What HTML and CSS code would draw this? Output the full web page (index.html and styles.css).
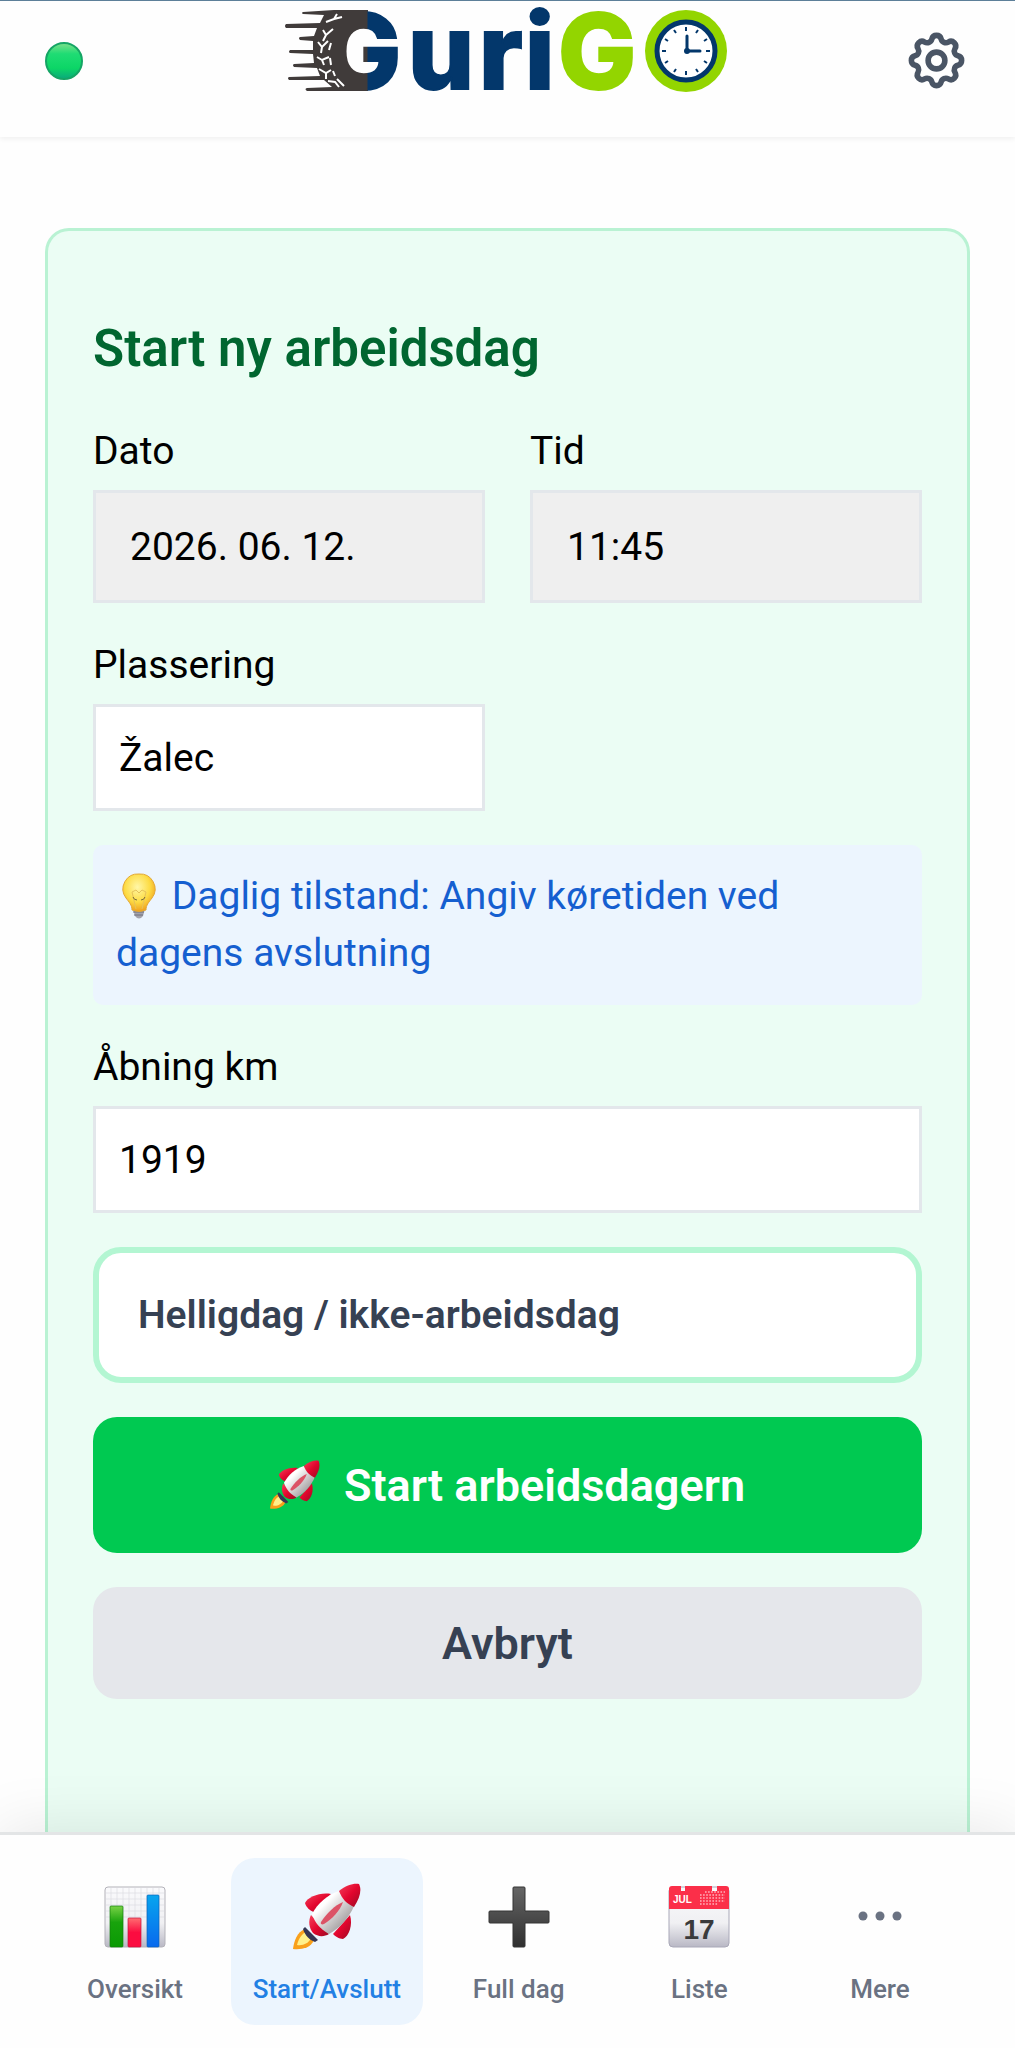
FILE: index.html
```html
<!DOCTYPE html>
<html lang="no">
<head>
  <meta charset="UTF-8" />
  <meta name="viewport" content="width=device-width, initial-scale=1.0" />
  <title>GuriGO</title>
  <link rel="stylesheet" href="styles.css">
</head>
<body>

  <!-- shared icons -->
  <svg class="sprite" aria-hidden="true">
    <defs>
      <linearGradient id="body-white" x1="0" y1="0" x2="1" y2="1">
        <stop offset="0.3" stop-color="#ffffff" />
        <stop offset="0.75" stop-color="#a9a5a6" />
      </linearGradient>
      <linearGradient id="rocket-red" x1="0" y1="0" x2="1" y2="1">
        <stop offset="0" stop-color="#f5405a" />
        <stop offset="0.5" stop-color="#e3062e" />
        <stop offset="1" stop-color="#9c0a24" />
      </linearGradient>
    </defs>
    <symbol id="rocket" viewBox="0 0 68 68">
      <path d="M12 46C4 49 1 58 0 66C8 67 18 65 21 57Z" fill="#f9a01b" />
      <path d="M13 49C7 52 5 58 4 62C10 63 16 60 18 55Z" fill="#fff08a" />
      <path d="M38 11C27 9 15 14 12 20C13 24 17 28 21 29Z" fill="url(#rocket-red)" />
      <path d="M57 32C60 42 56 53 50 56C46 56 42 53 40 51Z" fill="url(#rocket-red)" />
      <path d="M12 44L25 57L22 59C16 57 12 52 10 46Z" fill="#353654" />
      <path d="M18 32L36 51C31 54 25 54 20 50C16 45 15 38 18 32Z" fill="url(#rocket-red)" />
      <path d="M46 8C34 12 25 20 19 31C22 40 27 46 36 51C47 45 56 35 61 23Z" fill="url(#body-white)" />
      <path d="M46 8C53 2 61 0 66 1C69 7 67 15 61 24C54 21 49 16 46 8Z" fill="url(#rocket-red)" />
      <path d="M50 19C42 22 33 31 28 39C27 41 29 42 31 41C39 36 47 28 50 19Z" fill="#dc5366" />
    </symbol>
  </svg>

  <div class="app">
    <header class="topbar">
      <svg class="status-dot" viewBox="0 0 38 38" role="img" aria-label="Online">
        <defs>
          <linearGradient id="dot" x1="0" y1="0" x2="0" y2="1">
            <stop offset="0" stop-color="#7ee08b" />
            <stop offset="0.3" stop-color="#1fdc74" />
            <stop offset="0.7" stop-color="#0cd666" />
            <stop offset="1" stop-color="#0aa87c" />
          </linearGradient>
        </defs>
        <circle cx="19" cy="19" r="18" fill="url(#dot)" stroke="#15a565" stroke-width="2" />
      </svg>

      <svg class="logo" viewBox="0 0 470 121" role="img" aria-label="GuriGO">
        <defs>
          <linearGradient id="logo-g" gradientUnits="userSpaceOnUse" x1="97" y1="0" x2="98" y2="0">
            <stop offset="0" stop-color="#403b3a" />
            <stop offset="1" stop-color="#03376b" />
          </linearGradient>
        </defs>
        <!-- speed lines and tyre -->
        <g fill="#403b3a">
          <path d="M33 12L64 10L98 10V26C84 27 74 38 74 51C74 65 84 75 98 76V91L37 91Q34 89 37 88L62 87L54 80L19 80Q17 78 19 77L50 76L47 68L24 67Q22 65 24 64L44 63L43 54L20 53Q18 52 20 50L43 50L43 41L30 40Q28 38 30 37L44 36L47 28L16 28Q14 26 16 24L50 23L54 15L33 14Q31 13 33 12Z" />
        </g>
        <text class="logo-text" x="53" y="89" fill="url(#logo-g)" stroke="url(#logo-g)">G</text>
        <text class="logo-text" x="138 209 255" y="89" fill="#03376b" stroke="#03376b">uri</text>
        <text class="logo-text" x="288" y="89" fill="#93d500" stroke="#93d500">G</text>
        <g class="tread">
          <path d="M56 22L64 19L72 17M64 19L67 14M53 30L56 35L63 29M56 35L53 41M48 42L52 47L58 41M52 47L51 53M61 43L59 50M47 57L52 60L59 57M52 60L54 65M60 58L61 65M49 69L56 73L61 70M56 73L56 79M63 71L65 76M58 81L65 82L69 87M67 79L74 86" />
        </g>
        <!-- clock -->
        <circle cx="416" cy="51" r="41" fill="#93d500" />
        <circle cx="416" cy="51" r="29" fill="#fff" stroke="#03376b" stroke-width="5" />
        <g class="clock-marks">
          <path d="M416 27v4M416 71v4M392 51h4M436 51h4M404 30l2 3M428 30l-2 3M404 72l2-3M428 72l-2-3M395 39l3 2M437 39l-3 2M395 63l3-2M437 63l-3-2" />
        </g>
        <path d="M417 36V51H430" fill="none" stroke="#03376b" stroke-width="3" stroke-linecap="round" />
        <circle cx="417" cy="51" r="3" fill="#03376b" />
      </svg>

      <button type="button" class="settings-btn" aria-label="Innstillinger">
        <svg viewBox="0 0 24 24" fill="none" stroke="currentColor" stroke-width="2" stroke-linecap="round" stroke-linejoin="round">
          <path d="M10.325 4.317c.426-1.756 2.924-1.756 3.35 0a1.724 1.724 0 002.573 1.066c1.543-.94 3.31.826 2.37 2.37a1.724 1.724 0 001.065 2.572c1.756.426 1.756 2.924 0 3.35a1.724 1.724 0 00-1.066 2.573c.94 1.543-.826 3.31-2.37 2.37a1.724 1.724 0 00-2.572 1.065c-.426 1.756-2.924 1.756-3.35 0a1.724 1.724 0 00-2.573-1.066c-1.543.94-3.31-.826-2.37-2.37a1.724 1.724 0 00-1.065-2.572c-1.756-.426-1.756-2.924 0-3.35a1.724 1.724 0 001.066-2.573c-.94-1.543.826-3.31 2.37-2.37.996.608 2.296.07 2.572-1.065z" />
          <circle cx="12" cy="12" r="3" />
        </svg>
      </button>
    </header>

    <main class="content">
      <form class="card">
        <h2 class="card-title">Start ny arbeidsdag</h2>

        <div class="grid">
          <div class="field">
            <label for="date">Dato</label>
            <input type="text" id="date" name="date" class="locked" value="2026. 06. 12." readonly />
          </div>
          <div class="field">
            <label for="time">Tid</label>
            <input type="text" id="time" name="time" class="locked" value="11:45" readonly />
          </div>
          <div class="field">
            <label for="place">Plassering</label>
            <input type="text" id="place" name="place" value="Žalec" />
          </div>
        </div>

        <p class="tip"><svg class="bulb" viewBox="0 0 46 46" aria-hidden="true">
            <defs>
              <radialGradient id="bulb" cx="0.45" cy="0.35" r="0.65">
                <stop offset="0" stop-color="#fff7a8" />
                <stop offset="0.6" stop-color="#fddc45" />
                <stop offset="1" stop-color="#f0a01c" />
              </radialGradient>
            </defs>
            <path d="M17 36H29L27 43Q23 48 19 43Z" fill="#a3a3ad" />
            <path d="M17 39H28M18 42H27" stroke="#71717c" />
            <path d="M23 1A15 15 0 0 0 10 25C13 29 16 32 16 37Q23 40 30 37C30 32 33 29 36 25A15 15 0 0 0 23 1Z" fill="url(#bulb)" stroke="#e3a935" />
            <path d="M20 36L16 19L20 17L23 20L26 17L30 19L26 36" fill="none" stroke="#e6c25a" />
            <path d="M17 24Q18 27 21 27M29 24Q28 27 25 27" fill="none" stroke="#75693a" />
          </svg> Daglig tilstand: Angiv køretiden ved dagens avslutning</p>

        <div class="field">
          <label for="km">Åbning km</label>
          <input type="text" inputmode="numeric" id="km" name="km" value="1919" />
        </div>

        <button type="button" class="holiday-btn" aria-pressed="false">Helligdag / ikke-arbeidsdag</button>
        <button type="submit" class="btn btn-start">
          <svg class="btn-icon" aria-hidden="true"><use href="#rocket" /></svg>
          Start arbeidsdagern
        </button>
        <button type="button" class="btn btn-cancel">Avbryt</button>
      </form>
    </main>

    <nav class="tabbar">
      <a href="#oversikt" class="tab">
        <svg class="tab-icon" viewBox="0 0 68 68" aria-hidden="true">
          <defs>
            <linearGradient id="paper" x1="0" y1="0" x2="0" y2="1">
              <stop offset="0" stop-color="#fafafc" />
              <stop offset="0.6" stop-color="#f0f0f3" />
              <stop offset="1" stop-color="#b9b8c5" />
            </linearGradient>
            <linearGradient id="bar-green" x1="0" y1="0" x2="0" y2="1">
              <stop offset="0" stop-color="#79d246" />
              <stop offset="0.4" stop-color="#18a30c" />
              <stop offset="1" stop-color="#0a9a04" />
            </linearGradient>
            <linearGradient id="bar-red" x1="0" y1="0" x2="0" y2="1">
              <stop offset="0" stop-color="#ff6d71" />
              <stop offset="0.5" stop-color="#fb0c40" />
            </linearGradient>
            <linearGradient id="bar-blue" x1="0" y1="0" x2="0" y2="1">
              <stop offset="0" stop-color="#08a5ee" />
              <stop offset="1" stop-color="#0869ee" />
            </linearGradient>
          </defs>
          <rect x="4" y="4" width="60" height="60" rx="3" fill="url(#paper)" stroke="#b3b2b9" />
          <path d="M10 5V63M16 5V63M22 5V63M28 5V63M34 5V63M40 5V63M46 5V63M52 5V63M58 5V63M5 10H63M5 16H63M5 22H63M5 28H63M5 34H63" stroke="#dddde2" stroke-width="0.7" />
          <rect x="9" y="23" width="13" height="41" rx="1" fill="url(#bar-green)" stroke="#11800c" stroke-width="0.7" />
          <rect x="27" y="35" width="13" height="29" rx="1" fill="url(#bar-red)" stroke="#c6143c" stroke-width="0.7" />
          <rect x="46" y="12" width="12" height="52" rx="1" fill="url(#bar-blue)" stroke="#0963b8" stroke-width="0.7" />
        </svg>
        <span>Oversikt</span>
      </a>
      <a href="#start" class="tab active" aria-current="page">
        <svg class="tab-icon" aria-hidden="true"><use href="#rocket" /></svg>
        <span>Start/Avslutt</span>
      </a>
      <a href="#full-dag" class="tab">
        <svg class="tab-icon" viewBox="0 0 68 68" aria-hidden="true">
          <defs>
            <linearGradient id="plus" x1="0" y1="0" x2="0" y2="1">
              <stop offset="0" stop-color="#666666" />
              <stop offset="1" stop-color="#2f2f2f" />
            </linearGradient>
          </defs>
          <path d="M29 4H39Q40 4 40 5V28H63Q64 28 64 29V39Q64 40 63 40H40V63Q40 64 39 64H29Q28 64 28 63V40H5Q4 40 4 39V29Q4 28 5 28H28V5Q28 4 29 4Z" fill="url(#plus)" stroke="#353535" />
        </svg>
        <span>Full dag</span>
      </a>
      <a href="#liste" class="tab">
        <svg class="tab-icon" viewBox="0 0 68 68" aria-hidden="true">
          <rect x="4" y="4" width="60" height="60" rx="4" fill="url(#paper)" stroke="#a9a8b8" />
          <path d="M7 3H16V8H20V3H47V8H52V3H61Q64 3 64 6V26H4V6Q4 3 7 3Z" fill="#fb2f49" />
          <path d="M35 12H60M35 15H60M35 18H60M35 21H53M40 9H60" stroke="#ffb3bb" stroke-width="1.4" stroke-dasharray="1.6 1.5" />
          <text class="cal-month" x="8" y="20">JUL</text>
          <text class="cal-day" x="34" y="56">17</text>
        </svg>
        <span>Liste</span>
      </a>
      <a href="#mere" class="tab">
        <svg class="tab-icon" viewBox="0 0 68 68" fill="currentColor" aria-hidden="true">
          <circle cx="17" cy="33" r="4.5" />
          <circle cx="34" cy="33" r="4.5" />
          <circle cx="51" cy="33" r="4.5" />
        </svg>
        <span>Mere</span>
      </a>
    </nav>
  </div>

</body>
</html>
```
FILE: styles.css
```css
* {
  box-sizing: border-box;
}
body {
  margin: 0;
  font-family: Roboto, "Liberation Sans", sans-serif;
  font-size: 39px;
  line-height: 57px;
  color: #000;
  background: #fefefe;
}
.sprite {
  position: absolute;
  width: 0;
  height: 0;
}
.app {
  display: flex;
  flex-direction: column;
  min-height: 100vh;
}

/* header */
.topbar {
  display: flex;
  align-items: center;
  justify-content: space-between;
  padding: 0 45px 16px;
  background: #fefefe;
  box-shadow: inset 0 1px 0 #5d7f99, 0 2px 5px rgba(0, 0, 0, 0.06);
}
.status-dot {
  width: 38px;
  height: 38px;
  margin-right: 24px;
}
.logo {
  width: 470px;
  height: 121px;
  overflow: visible;
}
.logo-text {
  font-family: Inter, sans-serif;
  font-weight: 800;
  font-size: 104px;
  stroke-width: 2;
}
.tread {
  fill: none;
  stroke: #fff;
  stroke-width: 2;
}
.clock-marks {
  stroke: #03376b;
  stroke-width: 2;
}
.settings-btn {
  width: 67px;
  height: 67px;
  padding: 0;
  border: none;
  background: none;
  color: #4a5565;
  cursor: pointer;
}
.settings-btn svg {
  display: block;
}

/* form card */
.content {
  flex: 1;
  display: flex;
  padding: 91px 45px 0;
}
.card {
  flex: 1;
  min-width: 0;
  display: flex;
  flex-direction: column;
  gap: 34px;
  padding: 84px 45px;
  background: #ebfdf4;
  border: 3px solid #b9f2d3;
  border-bottom: none;
  border-radius: 24px 24px 0 0;
}
.card-title {
  margin: 0 0 6px;
  font-size: 51px;
  line-height: 68px;
  font-weight: 600;
  color: #016630;
}
.grid {
  display: grid;
  grid-template-columns: 1fr 1fr;
  gap: 34px 45px;
}
.field {
  display: flex;
  flex-direction: column;
  gap: 10px;
  min-width: 0;
}
.field input {
  width: 100%;
  height: 107px;
  padding: 0 23px;
  border: 3px solid #e3e7eb;
  border-radius: 0;
  background: #fff;
  color: #000;
  font: inherit;
}
.field .locked {
  height: 113px;
  padding: 0 34px;
  background: #efefef;
}
.tip {
  margin: 0;
  padding: 23px;
  border-radius: 10px;
  background: #ecf5fe;
  color: #155fd0;
}
.bulb {
  width: 46px;
  height: 46px;
  vertical-align: -10px;
}
.holiday-btn {
  height: 136px;
  padding: 0 39px;
  border: 6px solid #b3f6d2;
  border-radius: 28px;
  background: #fff;
  color: #364153;
  font: inherit;
  font-weight: 600;
  text-align: left;
}
.btn {
  display: flex;
  align-items: center;
  justify-content: center;
  gap: 24px;
  height: 112px;
  border: none;
  border-radius: 24px;
  font: inherit;
  font-size: 45px;
  font-weight: 600;
  cursor: pointer;
}
.btn-start {
  height: 136px;
  background: #00c951;
  color: #fff;
}
.btn-cancel {
  background: #e5e7eb;
  color: #364153;
}
.btn-icon {
  width: 50px;
  height: 50px;
}

/* bottom tabs */
.tabbar {
  position: sticky;
  bottom: 0;
  display: flex;
  justify-content: space-between;
  padding: 23px 50px;
  border-top: 3px solid #e3e5e6;
  background: #fefefe;
  box-shadow: 0 0 60px rgba(0, 0, 0, 0.1);
}
.tab {
  display: flex;
  flex-direction: column;
  align-items: center;
  gap: 20px;
  min-width: 170px;
  padding: 25px 22px 18px;
  border-radius: 24px;
  color: #6a7282;
  font-size: 26px;
  line-height: 36px;
  font-weight: 500;
  text-decoration: none;
}
.tab.active {
  background: #ecf5fe;
  color: #2280e4;
}
.tab-icon {
  width: 68px;
  height: 68px;
}
.cal-month {
  font: bold 10px "Liberation Sans", sans-serif;
  fill: #fff;
}
.cal-day {
  font: bold 28px "Liberation Sans", sans-serif;
  fill: #3a3a3c;
  text-anchor: middle;
}
```
